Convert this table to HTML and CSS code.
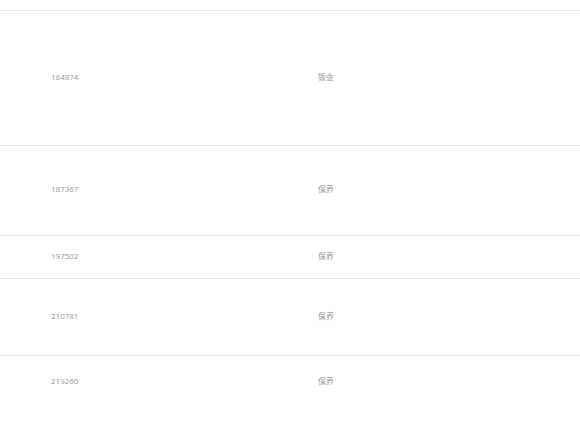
FILE: index.html
```html
<!DOCTYPE html>
<html>
<head>
<meta charset="utf-8">
<link rel="stylesheet" href="styles.css">
</head>
<body>
<div class="table">
  <div class="spacer"></div>
  <div class="row r1"><div class="c1">184874</div><div class="c2">钣金</div></div>
  <div class="row r2"><div class="c1">187367</div><div class="c2">保养</div></div>
  <div class="row r3"><div class="c1">197502</div><div class="c2">保养</div></div>
  <div class="row r4"><div class="c1">210781</div><div class="c2">保养</div></div>
  <div class="row r5"><div class="c1">219260</div><div class="c2">保养</div></div>
</div>
</body>
</html>
```
FILE: styles.css
```css
html, body { margin: 0; padding: 0; background: #fff; }
body { font-family: "Open Sans", "Noto Sans CJK SC", sans-serif; font-size: 8px; line-height: 12px; color: #999; }
.table { width: 580px; }
.spacer { height: 10px; }
.row { display: flex; align-items: center; border-top: 1px solid #e8e8e8; padding-bottom: 3px; }
.c1 { width: 318px; padding-left: 51px; box-sizing: border-box; }
.c2 { flex: 1; }
.r1 { height: 131px; }
.r2 { height: 86px; }
.r3 { height: 39px; }
.r4 { height: 73px; }
.r5 { height: 49px; }
```
